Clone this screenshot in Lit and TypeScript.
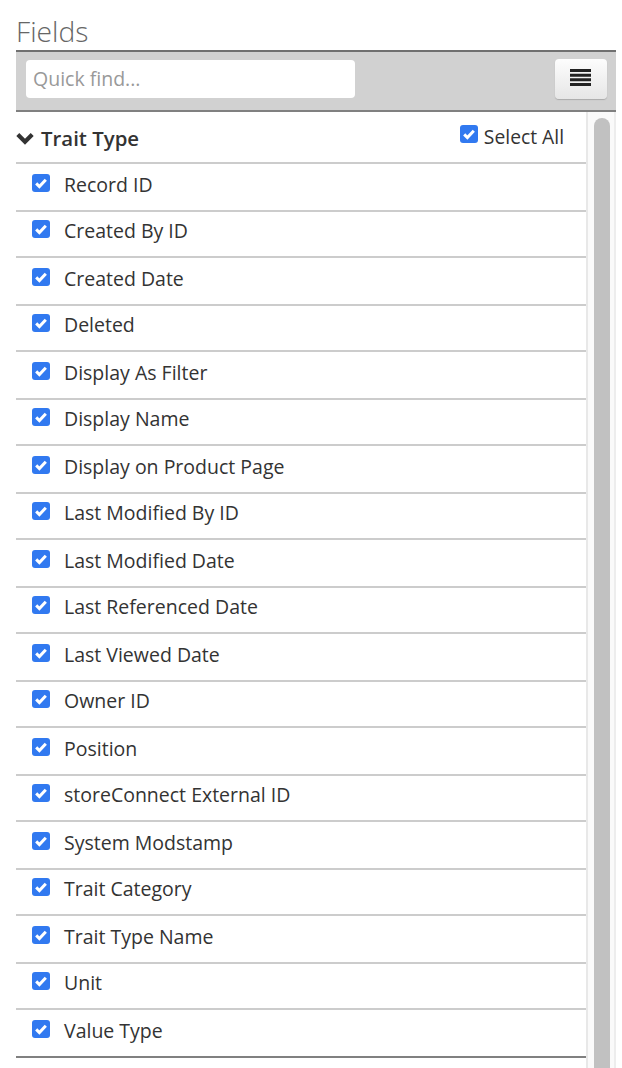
import { LitElement, html, css } from "lit";
import { customElement } from "lit/decorators.js";

const FIELDS = [
  "Record ID", "Created By ID", "Created Date", "Deleted", "Display As Filter", "Display Name",
  "Display on Product Page", "Last Modified By ID", "Last Modified Date", "Last Referenced Date",
  "Last Viewed Date", "Owner ID", "Position", "storeConnect External ID", "System Modstamp",
  "Trait Category", "Trait Type Name", "Unit", "Value Type",
];

const box = html`<svg class="cb" viewBox="0 0 18 18" aria-hidden="true">
  <rect width="18" height="18" rx="3" fill="#3179f0"></rect>
  <path d="M4.2 9.4 7.4 12.6 13.8 5.8" fill="none" stroke="#fff" stroke-width="3"></path>
</svg>`;

@customElement("app-root")
export class AppRoot extends LitElement {
  static styles = css`
    :host {
      display: block;
      height: 1068px;
      overflow: hidden;
      background: #fff;
      font-family: "Open Sans", "Liberation Sans", sans-serif;
      color: #333;
      padding: 0 6px 0 16px;
      box-sizing: border-box;
    }
    .title {
      height: 50px;
      box-sizing: border-box;
      padding-top: 10px;
      font-size: 28.2px;
      line-height: 42px;
      font-weight: 300;
      color: #666;
      overflow: hidden;
    }
    .bar {
      height: 62px;
      box-sizing: border-box;
      border-top: 2px solid #707070;
      border-bottom: 2px solid #808080;
      background: #d1d1d1;
      display: flex;
      align-items: center;
      justify-content: space-between;
      padding: 0 9px 4px 10px;
    }
    .find {
      width: 329px;
      height: 38px;
      box-sizing: border-box;
      background: #fff;
      border-radius: 4px;
      padding-left: 7px;
      font-size: 19.5px;
      line-height: 38px;
      color: #999;
    }
    .menu {
      width: 52px;
      height: 40px;
      box-sizing: border-box;
      border-radius: 4px;
      background: linear-gradient(#fdfdfd, #e6e6e6);
      box-shadow: 0 1px 1px #aaa;
      display: flex;
      align-items: center;
      justify-content: center;
      padding: 0 2px 3px 0;
    }
    .menu svg { width: 21px; height: 17px; display: block; }
    .body { display: flex; height: 956px; }
    .list { width: 570px; flex: none; }
    .head {
      height: 52px;
      box-sizing: border-box;
      display: flex;
      align-items: center;
      border-bottom: 2px solid #ccc;
    }
    .chev { width: 18px; height: 13px; margin: 3px 7px 0 0; flex: none; }
    .head b { font-size: 20.4px; font-weight: 600; color: #333; padding-top: 2px; }
    .all {
      margin-left: auto;
      margin-right: 22px;
      display: flex;
      align-items: center;
      gap: 6px;
      font-size: 19.3px;
      position: relative;
      top: -1px;
    }
    .row {
      display: flex;
      align-items: center;
      box-sizing: border-box;
      border-bottom: 2px solid #ccc;
      padding-left: 16px;
      font-size: 19.5px;
      color: #333;
      gap: 14px;
    }
    .row:nth-child(even) { height: 48px; padding-bottom: 6px; }
    .row:nth-child(odd) { height: 46px; padding-bottom: 8px; }
    .row:last-child { border-bottom-color: #808080; }
    .row .cb { transform: translateY(-1px); }
    .cb { width: 18px; height: 18px; flex: none; display: block; transform: translateY(-2px); }
    .track {
      width: 30px;
      flex: none;
      box-sizing: border-box;
      background: #fafafa;
      border-left: 2px solid #e8e8e8;
      border-right: 2px solid #ededed;
      padding: 6px 4px 0 6px;
    }
    .thumb {
      height: 100%;
      width: 16px;
      background: #c1c1c1;
      border-radius: 8px 8px 0 0;
    }
  `;

  render() {
    return html`
      <div class="title">Fields</div>
      <div class="bar">
        <div class="find">Quick find...</div>
        <div class="menu">
          <svg viewBox="0 0 21 17" aria-hidden="true">
            <path d="M0 1.5H21M0 6.2H21M0 10.8H21M0 15.5H21" stroke="#222" stroke-width="3"></path>
          </svg>
        </div>
      </div>
      <div class="body">
        <div class="list">
          <div class="head">
            <svg class="chev" viewBox="0 0 18 13" aria-hidden="true">
              <path d="M1.8 2.6 9 9.8 16.2 2.6" fill="none" stroke="#333" stroke-width="4.2"></path>
            </svg>
            <b>Trait Type</b>
            <span class="all">${box}Select All</span>
          </div>
          ${FIELDS.map((f) => html`<div class="row">${box}<span>${f}</span></div>`)}
        </div>
        <div class="track"><div class="thumb"></div></div>
      </div>
    `;
  }
}
